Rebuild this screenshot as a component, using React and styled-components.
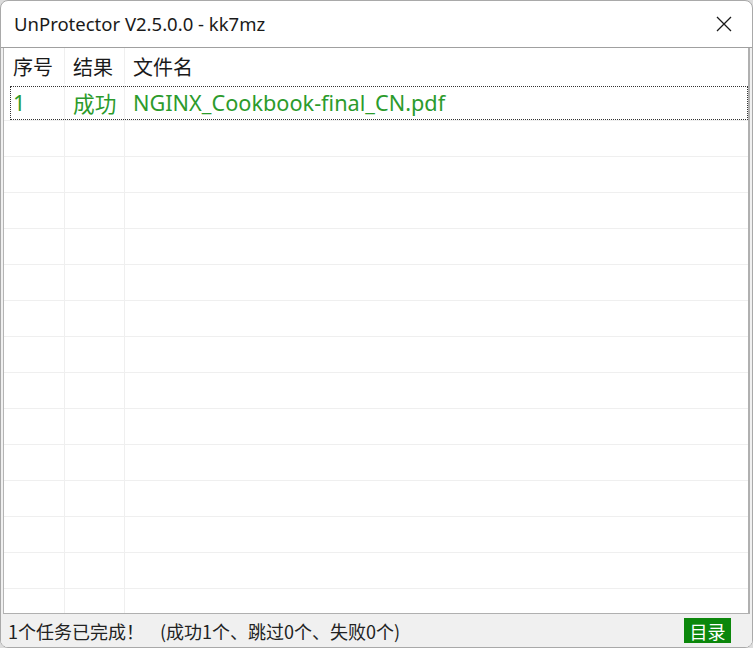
import React from "react";
import styled, { createGlobalStyle } from "styled-components";

const Global = createGlobalStyle`
  html, body { margin: 0; padding: 0; background: #dcdcdc; }
  body { font-family: "Noto Sans", "Noto Sans CJK SC", sans-serif; }
  #root { width: 753px; height: 648px; }
`;

const Window = styled.div`
  box-sizing: border-box;
  width: 753px;
  height: 648px;
  background: #ffffff;
  border: 1px solid #a9a9a9;
  border-radius: 8px;
  overflow: hidden;
  display: flex;
  flex-direction: column;
`;

const TitleBar = styled.div`
  height: 46px;
  flex: none;
  display: flex;
  align-items: center;
  justify-content: space-between;
  padding: 0 0 0 13px;
  border-bottom: 1px solid #a0a0a0;
  font-family: "Noto Sans", "Noto Sans CJK SC", sans-serif;
  font-size: 18.5px;
  color: #1a1a1a;
`;

const Title = styled.span`
  margin-top: -2px;
`;

const CloseButton = styled.button`
  width: 50px;
  height: 46px;
  border: none;
  background: transparent;
  display: flex;
  align-items: center;
  justify-content: center;
  padding: 0;
  margin-right: 3px;
`;

const Body = styled.div`
  flex: 1;
  display: flex;
  flex-direction: column;
  background: #f0f0f0;
  min-height: 0;
`;

const ListArea = styled.div`
  flex: 1;
  min-height: 0;
  overflow: hidden;
  background: #ffffff;
  margin: 0 2px 0 2px;
  border-left: 1px solid #b4b4b4;
  border-right: 2px solid #b0b0b0;
  border-bottom: 1px solid #b0b0b0;
  display: flex;
  flex-direction: column;
`;

const Row = styled.div`
  position: relative;
  display: grid;
  grid-template-columns: 61px 60px 1fr;
  height: ${(p) => (p.$header ? "37px" : "36px")};
  flex: none;
  box-sizing: border-box;
  border-bottom: 1px solid ${(p) => (p.$header ? "transparent" : "#efefef")};
  font-family: "Noto Sans", "Noto Sans CJK SC", sans-serif;
  font-size: ${(p) => (p.$header ? "20px" : "21.7px")};
  color: ${(p) => (p.$ok ? "#2c9b2c" : "#1a1a1a")};
`;

const Cell = styled.div`
  display: flex;
  align-items: center;
  padding-left: ${(p) => (p.$first ? "9px" : "8px")};
  border-right: ${(p) => (p.$last ? "none" : "1px solid #efefef")};
  white-space: nowrap;
  overflow: hidden;
`;

const Focus = styled.div`
  position: absolute;
  left: 6px;
  right: 0;
  top: 1px;
  bottom: 0;
  border: 1px dotted #333;
  pointer-events: none;
`;

const StatusBar = styled.div`
  height: 33px;
  flex: none;
  display: flex;
  align-items: center;
  justify-content: space-between;
  padding: 0 21px 0 7px;
  background: #f0f0f0;
  font-family: "Noto Sans CJK SC", "Noto Sans", sans-serif;
  font-size: 18px;
  color: #222222;
`;

const Gap = styled.span`
  display: inline-block;
  width: 16px;
`;

const DirButton = styled.button`
  width: 47px;
  height: 25px;
  border: none;
  background: #0b870b;
  color: #ffffff;
  font-family: "Noto Sans CJK SC", sans-serif;
  font-size: 18px;
  padding: 0;
  display: flex;
  align-items: center;
  justify-content: center;
`;

const rows = [{ no: "1", result: "成功", name: "NGINX_Cookbook-final_CN.pdf" }];

export default function App() {
  const empties = Array.from({ length: 14 });
  return (
    <>
      <Global />
      <Window>
        <TitleBar>
          <Title>UnProtector V2.5.0.0 - kk7mz</Title>
          <CloseButton aria-label="close">
            <svg width="16" height="16" viewBox="0 0 16 16">
              <path d="M1 1 L15 15 M15 1 L1 15" stroke="#1a1a1a" strokeWidth="1.3" fill="none" />
            </svg>
          </CloseButton>
        </TitleBar>
        <Body>
          <ListArea>
            <Row $header>
              <Cell $first>序号</Cell>
              <Cell>结果</Cell>
              <Cell $last>文件名</Cell>
            </Row>
            {rows.map((r) => (
              <Row key={r.no} $ok>
                <Cell $first>{r.no}</Cell>
                <Cell>{r.result}</Cell>
                <Cell $last>{r.name}</Cell>
                <Focus />
              </Row>
            ))}
            {empties.map((_, i) => (
              <Row key={i}>
                <Cell $first />
                <Cell />
                <Cell $last />
              </Row>
            ))}
          </ListArea>
          <StatusBar>
            <span>
              1个任务已完成！<Gap />(成功1个、跳过0个、失败0个)
            </span>
            <DirButton>目录</DirButton>
          </StatusBar>
        </Body>
      </Window>
    </>
  );
}
